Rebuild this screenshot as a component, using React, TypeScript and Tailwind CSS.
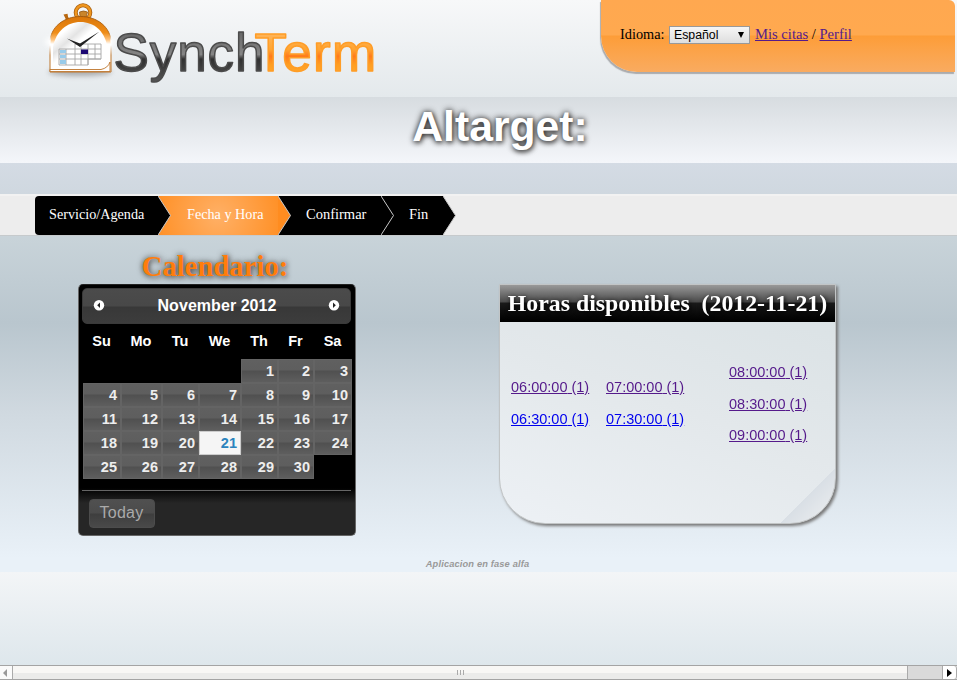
import React from 'react';

const serif = "font-['Liberation_Serif','Times_New_Roman',serif]";
const sans = "font-['Liberation_Sans',Arial,sans-serif]";

function Logo() {
  return (
    <svg width="345" height="97" viewBox="0 0 345 97" className={`ml-[40px] block shrink-0 ${sans}`}>
      <defs>
        <linearGradient id="ink" gradientUnits="userSpaceOnUse" x1="0" y1="31" x2="0" y2="82">
          <stop offset="0" stopColor="#666" />
          <stop offset=".46" stopColor="#858585" />
          <stop offset=".55" stopColor="#303030" />
          <stop offset="1" stopColor="#555" />
        </linearGradient>
        <linearGradient id="flame" gradientUnits="userSpaceOnUse" x1="0" y1="31" x2="0" y2="73">
          <stop offset="0" stopColor="#ffb860" />
          <stop offset=".45" stopColor="#ffa431" />
          <stop offset=".6" stopColor="#ff7a1c" />
          <stop offset=".8" stopColor="#ff9e20" />
          <stop offset="1" stopColor="#ffa62b" />
        </linearGradient>
        <linearGradient id="rim" gradientUnits="userSpaceOnUse" x1="0" y1="16" x2="0" y2="72">
          <stop offset="0" stopColor="#d97508" />
          <stop offset=".3" stopColor="#ef8d18" />
          <stop offset=".42" stopColor="#ffc27a" />
          <stop offset=".5" stopColor="#fff" />
          <stop offset="1" stopColor="#fff" />
        </linearGradient>
        <linearGradient id="edge" gradientUnits="userSpaceOnUse" x1="0" y1="16" x2="0" y2="72">
          <stop offset="0" stopColor="#a55a0c" />
          <stop offset=".32" stopColor="#c2741f" />
          <stop offset=".44" stopColor="#fff" />
          <stop offset=".52" stopColor="#fff" />
          <stop offset=".7" stopColor="#bd752b" />
          <stop offset="1" stopColor="#bd752b" />
        </linearGradient>
        <linearGradient id="paper" x1="0" y1="0" x2="1" y2="1">
          <stop offset="0" stopColor="#fff" />
          <stop offset=".2" stopColor="#fff" />
          <stop offset=".34" stopColor="#e4e4e4" />
          <stop offset=".45" stopColor="#fff" />
        </linearGradient>
        <filter id="soft" x="-30%" y="-80%" width="160%" height="260%">
          <feGaussianBlur stdDeviation="2.5" />
        </filter>
      </defs>
      <ellipse cx="40" cy="72" rx="32" ry="4" fill="#777" opacity=".55" filter="url(#soft)" />
      <ellipse cx="40" cy="42" rx="35" ry="9" fill="#fff" opacity=".9" filter="url(#soft)" />
      <circle cx="43" cy="12.500" r="7.300" fill="none" stroke="#a75d0d" strokeWidth="4" />
      <circle cx="43" cy="12.500" r="7.300" fill="none" stroke="#ef961f" strokeWidth="2.400" />
      <path d="M40 16.500l-.5-4.500q4-2 8 0l-1 4.500z" fill="#c9852c" stroke="#8b4d0c" strokeWidth=".7" />
      <path d="M23.500 14.500l4-.8 .6 3.200 2 2.500-3.500 1.600-1.600-3.600z" fill="#b8670e" />
      <path d="M10 72V43C10 27 24 16.500 40.500 16.500S71 27 71 43V72z" fill="url(#rim)" stroke="url(#edge)" strokeWidth="1" />
      <path d="M13 69V47C16 31 27 22 40.500 22S64 31 67 45V63Q66 67 61 69z" fill="url(#paper)" />
      <path d="M10 69.500H61Q68 68 70 62V71.500H10z" fill="#fff" stroke="#bd752b" strokeWidth=".9" />
      <path d="M19 49h16v-5h26v15h-13v6H19zM19 54h42M19 59h42M26 49v16M35 49v16M41 44v21M48 44v21M55 44v15M35 49h26" fill="none" stroke="#a5a5a5" strokeWidth=".9" />
      <path d="M20 50h6v3h-6zM20 55h6v3h-6zM20 60h6v4h-6z" fill="#98cbea" />
      <rect x="41" y="49.500" width="7" height="4.500" fill="#1d0873" />
      <path d="M27 38.500L40 43.500 59.500 31.500 40 47z" fill="#222" />
      <text y="71.200" fontSize="53" strokeWidth="1.500" strokeLinejoin="round">
        <tspan x="73.500" letterSpacing=".9" fill="url(#ink)" stroke="#4c4c4c">Synch</tspan>
        <tspan x="214.500" letterSpacing="1.300" fill="url(#flame)" stroke="#ff9d27">Term</tspan>
      </text>
    </svg>
  );
}

function Header() {
  return (
    <header className="flex h-[97px] justify-between bg-linear-to-b from-[#f7f8f9] to-[#e4e9ec]">
      <Logo />
      <div className="mr-[2px] flex h-[72px] w-[354px] items-start rounded-tr-[6px] rounded-bl-[36px] bg-[linear-gradient(#ffa850_0,#ffa94f_35px,#fd9d38_36px,#fca246_48px,#f9ab60_72px)] pt-[25px] pl-[19px] text-[14.500px] shadow-[-1px_2px_1px_#aaabad]">
        <span className="w-[49px] text-[14.300px] leading-[18px] whitespace-nowrap">Idioma:</span>
        <span className={`mt-px flex h-[18px] w-[81px] items-center justify-between border border-[#999] bg-linear-to-b from-[#f6f6f6] to-[#dedede] pr-[5px] pl-1 text-[12.300px] ${sans}`}>
          Español
          <span className="h-0 w-0 border-x-[3.500px] border-t-[6px] border-x-transparent border-t-black" />
        </span>
        <span className="ml-[5px] text-[14.600px] leading-[18px] whitespace-nowrap">
          <a className="text-[#551a8b] underline">Mis citas</a> / <a className="text-[#551a8b] underline">Perfil</a>
        </span>
      </div>
    </header>
  );
}

function Tip({ fill }: { fill: string }) {
  return (
    <svg width="14" height="39" viewBox="0 0 14 39" className="absolute top-0 -right-[14px] z-10">
      <path d="M0 0L12.500 19.500 0 39z" fill={fill} />
      <path d="M0 0L12.500 19.500 0 39" fill="none" stroke="#c9c9c9" strokeWidth="1" />
    </svg>
  );
}

function Steps() {
  return (
    <nav className="flex h-[42px] border-t-2 border-b border-t-[#f2f2f2] border-b-[#c6cacc] bg-[#ededed] pl-[35px] text-[14.200px] leading-[37px] text-white">
      <div className="relative h-[39px] w-[123px] rounded-l-[4px] bg-black pl-[14px]">Servicio/Agenda<Tip fill="#000" /></div>
      <div className="relative h-[39px] w-[120px] bg-[radial-gradient(circle_at_60px_20px,#ffb066,#ff9128_62px)] pl-[29px]">Fecha y Hora<Tip fill="#ff8c20" /></div>
      <div className="relative h-[39px] w-[103px] bg-black pl-[28px] text-[14.500px]">Confirmar<Tip fill="#000" /></div>
      <div className="relative h-[39px] w-[62px] bg-black pl-[28px] text-[14.500px]">Fin<Tip fill="#000" /></div>
    </nav>
  );
}

function Arrow({ flip }: { flip?: boolean }) {
  return (
    <svg width="12" height="12" viewBox="0 0 12 12">
      <circle cx="6" cy="5.200" r="5.200" fill="#fff" />
      <path d={flip ? 'M5 2.400L7.800 5.200 5 8z' : 'M7 2.400L4.200 5.200 7 8z'} fill="#222" />
    </svg>
  );
}

const days = ['Su', 'Mo', 'Tu', 'We', 'Th', 'Fr', 'Sa'];
const dates = Array.from({ length: 35 }, (_, i) => i - 3);

function Calendar() {
  return (
    <div className={`h-[252px] w-[278px] rounded-[5px] border border-[#666] border-t-[#222] bg-[linear-gradient(#000_0,#000_203px,#262626_218px)] p-[3px] text-white ${sans}`}>
      <div className="mr-px flex h-[36px] items-center justify-between rounded-[5px] border border-[#3a3a3a] bg-[linear-gradient(#4b4b4b_0,#484848_17px,#383838_18px,#3d3d3d_36px)] px-[10px] text-[16px] font-bold">
        <Arrow />
        <span className="-mt-px pl-px tracking-[0.05px]">November 2012</span>
        <Arrow flip />
      </div>
      <div className="ml-px grid grid-cols-[38px_41px_37px_42px_37px_36px_38px] text-[14.500px] font-bold">
        {days.map((d) => (
          <div key={d} className="h-[35px] pr-px text-center leading-[34px]">{d}</div>
        ))}
        {dates.map((n) =>
          n < 1 || n > 30 ? (
            <div key={n} className="h-[24px]" />
          ) : n === 21 ? (
            <div key={n} className="h-[24px] border border-[#ccc] bg-[#f5f5f5] pr-[3px] text-right leading-[23px] text-[#2b83bd]">{n}</div>
          ) : (
            <div key={n} className="h-[24px] border border-[#646464] bg-[linear-gradient(#606060_0,#5e5e5e_10px,#505050_11px,#5e5e5e_22px)] pr-[3px] text-right leading-[23px] text-[#eee]">{n}</div>
          ),
        )}
      </div>
      <div className="mt-[11px] mr-px border-t border-[#666] pt-[8px] pl-[7px]">
        <div className="h-[29px] w-[66px] rounded-[4px] border border-[#4c4c4c] bg-[linear-gradient(#505050_0,#4b4b4b_13px,#3e3e3e_14px,#4a4a4a_28px)] pr-px text-center text-[16px] leading-[26px] tracking-[0.3px] text-[#aaa]">Today</div>
      </div>
    </div>
  );
}

function Slots({ items, className }: { items: [string, boolean][]; className: string }) {
  return (
    <div className={`flex flex-col ${className}`}>
      {items.map(([time, visited]) => (
        <a key={time} className={`h-[31.500px] leading-[18px] whitespace-nowrap underline ${visited ? 'text-[#551a8b]' : 'text-[#0000ee]'}`}>
          {time} (1)
        </a>
      ))}
    </div>
  );
}

function Hours() {
  return (
    <section className="h-[240px] w-[337px] overflow-hidden rounded-b-[46px] border border-[#c2c5c6] bg-[linear-gradient(135deg,transparent_90.5%,#d9dfe5_90.5%,#e8ebee_97%),linear-gradient(20deg,#edf1f5,#e3e8eb_50%,#d9e1e4)]">
      <h2 className="h-[37px] bg-[linear-gradient(#999_0,#4a4a4a_17px,#1a1a1a_18px,#000_36px)] text-center text-[23.800px] leading-[37px] font-bold whitespace-pre text-white [text-shadow:1px_1px_5px_#000]">Horas disponibles  (2012-11-21)</h2>
      <div className={`flex text-[14.500px] ${sans}`}>
        <Slots className="mt-[56px] ml-[11px] w-[95px]" items={[['06:00:00', true], ['06:30:00', false]]} />
        <Slots className="mt-[56px] w-[123px]" items={[['07:00:00', true], ['07:30:00', false]]} />
        <Slots className="mt-[41px]" items={[['08:00:00', true], ['08:30:00', true], ['09:00:00', true]]} />
      </div>
    </section>
  );
}

function Scrollbar() {
  return (
    <div className="flex h-[15px] border-y border-[#a4a4a4] bg-[#dadada]">
      <div className="flex w-[13px] items-center justify-center border-r border-[#aaa] bg-[#fafafa]">
        <span className="mr-[3px] h-0 w-0 border-y-[4px] border-r-[4px] border-y-transparent border-r-[#999]" />
      </div>
      <div className="flex w-[895px] items-center justify-center gap-[2px] border-r border-[#aaa] bg-[linear-gradient(#f8f7f5_50%,#ebebea_50%)]">
        <span className="h-[5px] w-px bg-[#aaa]" />
        <span className="h-[5px] w-px bg-[#aaa]" />
        <span className="h-[5px] w-px bg-[#aaa]" />
      </div>
      <div className="ml-auto flex w-[15px] items-center justify-center rounded-r-[3px] border-x border-[#aaa] bg-white">
        <span className="h-0 w-0 border-y-[4px] border-l-[5px] border-y-transparent border-l-black" />
      </div>
    </div>
  );
}

export default function App() {
  return (
    <div className={`flex h-[680px] w-[957px] flex-col overflow-hidden text-black ${serif}`}>
      <Header />
      <div className="h-[66px] bg-linear-to-b from-[#d7dce0] to-[#f4f6fa] pl-[43px] text-center">
        <h1 className={`text-[42.700px] leading-[58px] font-bold text-white [text-shadow:0_0_6px_#222,1px_2px_5px_#666] ${sans}`}>Altarget:</h1>
      </div>
      <main className="flex h-[409px] flex-col bg-[linear-gradient(#d4dbe4_0,#c8d3d9_75px,#b9c6ce_160px,#d0d9e0_250px,#e9f1f8_395px)] pt-[31px]">
        <Steps />
        <div className="flex">
          <div className="ml-[78px] w-[278px]">
            <h2 className="mt-[11px] h-[37px] pr-[4px] text-center text-[28.700px] leading-[38px] font-bold text-[#ff7d0c] [text-shadow:0_0_6px_#444,1px_2px_5px_#888]">Calendario:</h2>
            <Calendar />
          </div>
          <div className="mt-[48px] ml-[143px] [filter:drop-shadow(2px_2px_1.5px_#777)]">
            <Hours />
          </div>
        </div>
        <p className={`mt-[22px] pr-[2px] text-center text-[9.300px] leading-[12px] font-bold tracking-[0.14px] text-[#999] italic ${sans}`}>Aplicacion en fase alfa</p>
      </main>
      <footer className="h-[93px] bg-linear-to-b from-[#f3f5f7] to-[#dee7ec]" />
      <Scrollbar />
    </div>
  );
}
